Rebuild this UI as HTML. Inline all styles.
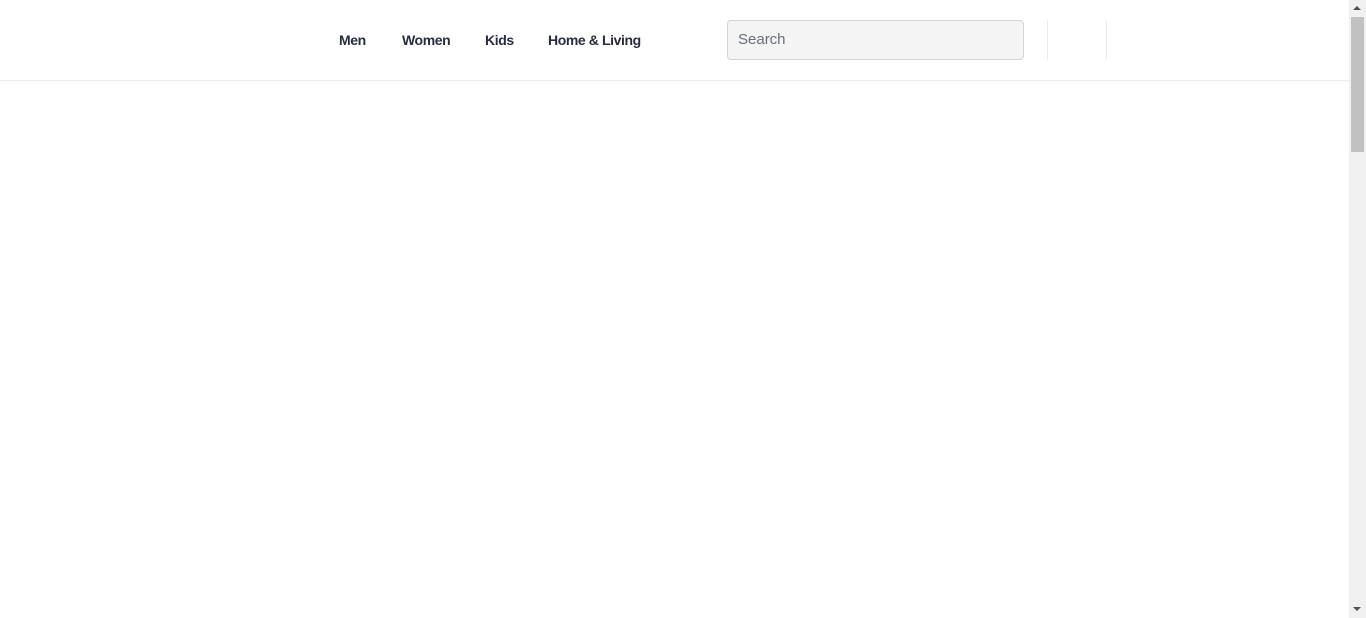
<!DOCTYPE html>
<html><head><style>
body{margin:0;width:1366px;height:618px;overflow:hidden;background:#fff;font-family:"Liberation Sans",sans-serif;position:relative}
.hdr{position:absolute;left:0;top:0;width:1349px;height:80px;border-bottom:1px solid #ececec;box-shadow:0 1px 2px rgba(0,0,0,0.04)}
.nav{position:absolute;top:32px;font-size:14px;font-weight:bold;color:#282c3f;letter-spacing:-0.4px}
.search{position:absolute;left:727px;top:20px;width:295px;height:38px;background:#f4f4f4;border:1px solid #d4d5d9;border-radius:4px}
.search span{position:absolute;left:10px;top:10px;font-size:15px;color:#696e79}
.vl{position:absolute;top:20px;width:1px;height:40px;background:#eaeaec}
.sb{position:absolute;left:1349px;top:0;width:17px;height:618px;background:#f1f1f1}
.th{position:absolute;left:1351px;top:17px;width:13px;height:135px;background:#c1c1c1}
.ar{position:absolute;left:1353px;width:0;height:0;border-left:4px solid transparent;border-right:4px solid transparent}
</style></head><body>
<div class="hdr"></div>
<div class="nav" style="left:339px">Men</div>
<div class="nav" style="left:402px">Women</div>
<div class="nav" style="left:485px">Kids</div>
<div class="nav" style="left:548px">Home &amp; Living</div>
<div class="search"><span>Search</span></div>
<div class="vl" style="left:1047px"></div>
<div class="vl" style="left:1106px"></div>
<div class="sb"></div><div class="th"></div>
<div class="ar" style="top:6px;border-bottom:4px solid #505050"></div>
<div class="ar" style="top:607px;border-top:4px solid #505050"></div>
</body></html>
